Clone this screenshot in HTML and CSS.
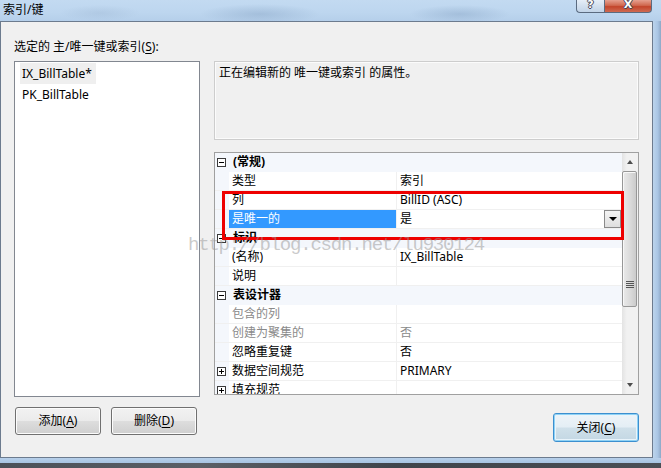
FILE: index.html
```html
<!DOCTYPE html>
<html lang="zh-CN">
<head>
<meta charset="utf-8">
<title>索引/键</title>
<link rel="stylesheet" href="styles.css">
</head>
<body>
<div class="window">
  <div class="titlebar">
    <span class="title">索引/键</span>
    <div class="caps">
      <div class="cap help">?</div>
      <div class="cap close">X</div>
    </div>
  </div>
  <div class="frame-row">
    <div class="client">
      <div class="label">选定的 主/唯一键或索引(<u>S</u>):</div>
      <div class="main">
        <div class="left">
          <div class="listbox">
            <div class="item sel">IX_BillTable*</div>
            <div class="item">PK_BillTable</div>
          </div>
          <div class="btnrow">
            <div class="btn">添加(<u>A</u>)</div>
            <div class="btn">删除(<u>D</u>)</div>
          </div>
        </div>
        <div class="right">
          <div class="desc">正在编辑新的 唯一键或索引 的属性。</div>
          <div class="grid">
            <div class="rows">
              <div class="row cat"><span class="gut"><i class="tog"></i></span><span class="catname">(常规)</span></div>
              <div class="row"><span class="gut"></span><span class="name">类型</span><span class="val">索引</span></div>
              <div class="row"><span class="gut"></span><span class="name">列</span><span class="val">BillID (ASC)</span></div>
              <div class="row"><span class="gut"></span><span class="name selname">是唯一的</span><span class="val">是<span class="dd"><i class="ddarrow"></i></span></span></div>
              <div class="row cat"><span class="gut"><i class="tog"></i></span><span class="catname">标识</span></div>
              <div class="row"><span class="gut"></span><span class="name">(名称)</span><span class="val">IX_BillTable</span></div>
              <div class="row"><span class="gut"></span><span class="name">说明</span><span class="val"></span></div>
              <div class="row cat"><span class="gut"><i class="tog"></i></span><span class="catname">表设计器</span></div>
              <div class="row"><span class="gut"></span><span class="name dis">包含的列</span><span class="val"></span></div>
              <div class="row"><span class="gut"></span><span class="name dis">创建为聚集的</span><span class="val dis">否</span></div>
              <div class="row"><span class="gut"></span><span class="name">忽略重复键</span><span class="val">否</span></div>
              <div class="row"><span class="gut"><i class="tog plus"></i></span><span class="name">数据空间规范</span><span class="val">PRIMARY</span></div>
              <div class="row"><span class="gut"><i class="tog plus"></i></span><span class="name">填充规范</span><span class="val"></span></div>
            </div>
            <div class="scrollbar">
              <div class="sb-arrow"><i class="tri-up"></i></div>
              <div class="thumb"><span class="grip"></span></div>
              <div class="sb-track"></div>
              <div class="sb-arrow"><i class="tri-down"></i></div>
            </div>
          </div>
          <div class="closerow">
            <div class="btn default">关闭(<u>C</u>)</div>
          </div>
        </div>
      </div>
    </div>
    <div class="rframe"></div>
  </div>
  <div class="bframe"></div>
  <div class="desktop"></div>
  <div class="redbox"></div>
  <div class="watermark">http://blog.csdn.net/lu930124</div>
</div>
</body>
</html>
```
FILE: styles.css
```css
* { box-sizing: border-box; }
html, body { margin: 0; padding: 0; }
body {
  width: 661px;
  height: 468px;
  overflow: hidden;
  font-family: "Noto Sans", "Noto Sans CJK SC", sans-serif;
  font-size: 12px;
  color: #000;
  background: #3e434a;
}
u { text-decoration: underline; text-underline-offset: 2px; }

.window {
  width: 661px;
  height: 468px;
  display: flex;
  flex-direction: column;
  position: relative;
  overflow: hidden;
}

/* title bar */
.titlebar {
  height: 21px;
  flex: none;
  display: flex;
  align-items: flex-start;
  background:
    radial-gradient(ellipse 60px 10px at 260px 14px, rgba(120,150,185,0.35), transparent),
    radial-gradient(ellipse 50px 9px at 460px 14px, rgba(120,150,185,0.35), transparent),
    radial-gradient(ellipse 40px 8px at 100px 13px, rgba(140,165,195,0.25), transparent),
    linear-gradient(#c3daf1, #bdd6ef 60%, #b5cfea);
}
.title {
  padding-left: 3px;
  line-height: 19px;
  font-size: 12px;
}
.caps {
  margin-left: auto;
  margin-right: 9px;
  display: flex;
  height: 13px;
}
.cap {
  height: 13px;
  border: 1px solid #5b6b80;
  border-top: none;
  font-family: "DejaVu Sans", sans-serif;
  font-weight: bold;
  font-size: 11px;
  line-height: 9px;
  text-align: center;
  color: #fff;
  overflow: hidden;
  text-shadow: 1px 0 0 #445, -1px 0 0 #445, 0 1px 0 #445, 0 -1px 0 #445;
}
.cap.help {
  width: 28px;
  border-radius: 0 0 0 4px;
  border-right: none;
  background: linear-gradient(#e6eef7, #d3e0ee 50%, #c2d4e8);
}
.cap.close {
  width: 48px;
  border-radius: 0 0 4px 0;
  background: linear-gradient(#e6a08f, #d0684f 45%, #c3452b 55%, #cf6a52);
}

/* frame */
.frame-row {
  height: 437px;
  flex: none;
  display: flex;
}
.client {
  width: 653px;
  height: 437px;
  background: #f0f0f0;
  border: 1px solid #6c7b8e;
  padding: 17px 13px 0 13px;
}
.rframe {
  flex: 1;
  background: linear-gradient(90deg, #bcd4ec, #a9c5e4 60%, #8ea8c6);
}
.bframe {
  height: 5px;
  flex: none;
  background: linear-gradient(#b7d0ea, #a7c3e2);
}
.desktop {
  flex: 1;
  background: linear-gradient(90deg, #4b5058, #5b5f66 30%, #3f444b 60%, #4a4e55);
}

.label {
  line-height: 16px;
  height: 16px;
  margin-bottom: 6px;
}

.main {
  display: flex;
  gap: 14px;
}
.left {
  width: 186px;
  flex: none;
  display: flex;
  flex-direction: column;
}
.listbox {
  height: 336px;
  background: #fff;
  border: 1px solid #828790;
  padding: 1px 0 0 5px;
}
.item {
  width: fit-content;
  height: 21px;
  line-height: 21px;
  padding: 0 4px 0 2px;
}
.item.sel { background: #efefef; }

.btnrow {
  margin-top: 10px;
  display: flex;
  gap: 10px;
  padding-left: 1px;
}
.btn {
  width: 86px;
  height: 28px;
  line-height: 26px;
  text-align: center;
  border: 1px solid #707070;
  border-radius: 3px;
  background: linear-gradient(#f2f2f2 0%, #ebebeb 48%, #dddddd 52%, #cfcfcf 100%);
  box-shadow: inset 0 0 0 1px #fcfcfc;
  color: #000;
}
.btn.default {
  height: 29px;
  line-height: 27px;
  border-color: #3c8fcf;
  background: linear-gradient(#eef4f8 0%, #e4eef5 48%, #cfe0ea 52%, #c3d7e3 100%);
  box-shadow: inset 0 0 0 1px #8fd2f5, inset 0 0 0 2px #e9f4fb;
}

.right {
  width: 425px;
  flex: none;
  display: flex;
  flex-direction: column;
}
.desc {
  height: 79px;
  border: 1px solid #cdcdcd;
  box-shadow: inset 0 0 0 1px #fbfbfb;
  background: #f0f0f0;
  padding: 3px 4px;
  line-height: 16px;
}

.grid {
  margin-top: 12px;
  height: 243px;
  border: 1px solid #a0a0a0;
  background: #fff;
  display: flex;
  overflow: hidden;
}
.rows {
  width: 407px;
  flex: none;
  display: flex;
  flex-direction: column;
  overflow: hidden;
}
.row {
  display: flex;
  height: 19px;
  flex: none;
  border-bottom: 1px solid #f0f0f0;
  line-height: 18px;
}
.gut {
  width: 14px;
  flex: none;
  background: #f4f7fc;
  display: flex;
  align-items: center;
}
.row.cat { background: #f4f7fc; border-bottom-color: #f4f7fc; }
.catname {
  padding-left: 4px;
  font-weight: bold;
}
.name {
  width: 168px;
  flex: none;
  padding-left: 3px;
  border-right: 1px solid #f0f0f0;
  white-space: nowrap;
}
.name.selname { background: #3399ff; color: #fff; }
.val {
  flex: 1;
  padding-left: 3px;
  display: flex;
  white-space: nowrap;
}
.dis { color: #8a8a8a; }

.tog {
  display: block;
  width: 9px;
  height: 9px;
  margin-left: 2px;
  border: 1px solid #3a3a3a;
  background: #fff;
  position: relative;
}
.tog::before {
  content: "";
  position: absolute;
  left: 1px;
  top: 3px;
  width: 5px;
  height: 1px;
  background: #000;
}
.tog.plus::after {
  content: "";
  position: absolute;
  left: 3px;
  top: 1px;
  width: 1px;
  height: 5px;
  background: #000;
}

.dd {
  margin-left: auto;
  margin-right: 1px;
  width: 17px;
  height: 18px;
  border: 1px solid #8a8a8a;
  background: linear-gradient(#f4f4f4, #dedede);
  display: flex;
  align-items: center;
  justify-content: center;
}
.ddarrow {
  width: 0;
  height: 0;
  border-left: 4px solid transparent;
  border-right: 4px solid transparent;
  border-top: 4px solid #000;
}

.scrollbar {
  width: 16px;
  flex: none;
  background: linear-gradient(90deg, #e3e3e3, #f1f1f1 30%, #f1f1f1);
  display: flex;
  flex-direction: column;
}
.sb-arrow {
  height: 18px;
  flex: none;
  display: flex;
  align-items: center;
  justify-content: center;
}
.tri-up, .tri-down {
  width: 0;
  height: 0;
  border-left: 3.5px solid transparent;
  border-right: 3.5px solid transparent;
}
.tri-up { border-bottom: 4px solid #4d4d4d; }
.tri-down { border-top: 4px solid #4d4d4d; }
.thumb {
  height: 136px;
  flex: none;
  margin: 0 1px 0 0;
  border: 1px solid #979797;
  border-radius: 2px;
  background: linear-gradient(90deg, #eaeaea, #dcdcdc 50%, #cbcbcb);
  box-shadow: inset 1px 1px 0 #f8f8f8;
  display: flex;
  justify-content: center;
  padding-top: 109px;
}
.grip {
  display: block;
  width: 8px;
  height: 7px;
  background: repeating-linear-gradient(#555 0 1px, transparent 1px 2px);
}
.sb-track { flex: 1; }

.closerow {
  margin-top: 18px;
  display: flex;
  justify-content: flex-end;
}

/* overlays */
.redbox {
  position: absolute;
  left: 222px;
  top: 191px;
  width: 402px;
  height: 49px;
  border: 3px solid #ee0000;
}
.watermark {
  position: absolute;
  left: 188px;
  top: 233px;
  font-family: "Liberation Mono", monospace;
  font-size: 19px;
  letter-spacing: -1.2px;
  line-height: 24px;
  color: rgba(150, 150, 150, 0.5);
  white-space: nowrap;
}
```
